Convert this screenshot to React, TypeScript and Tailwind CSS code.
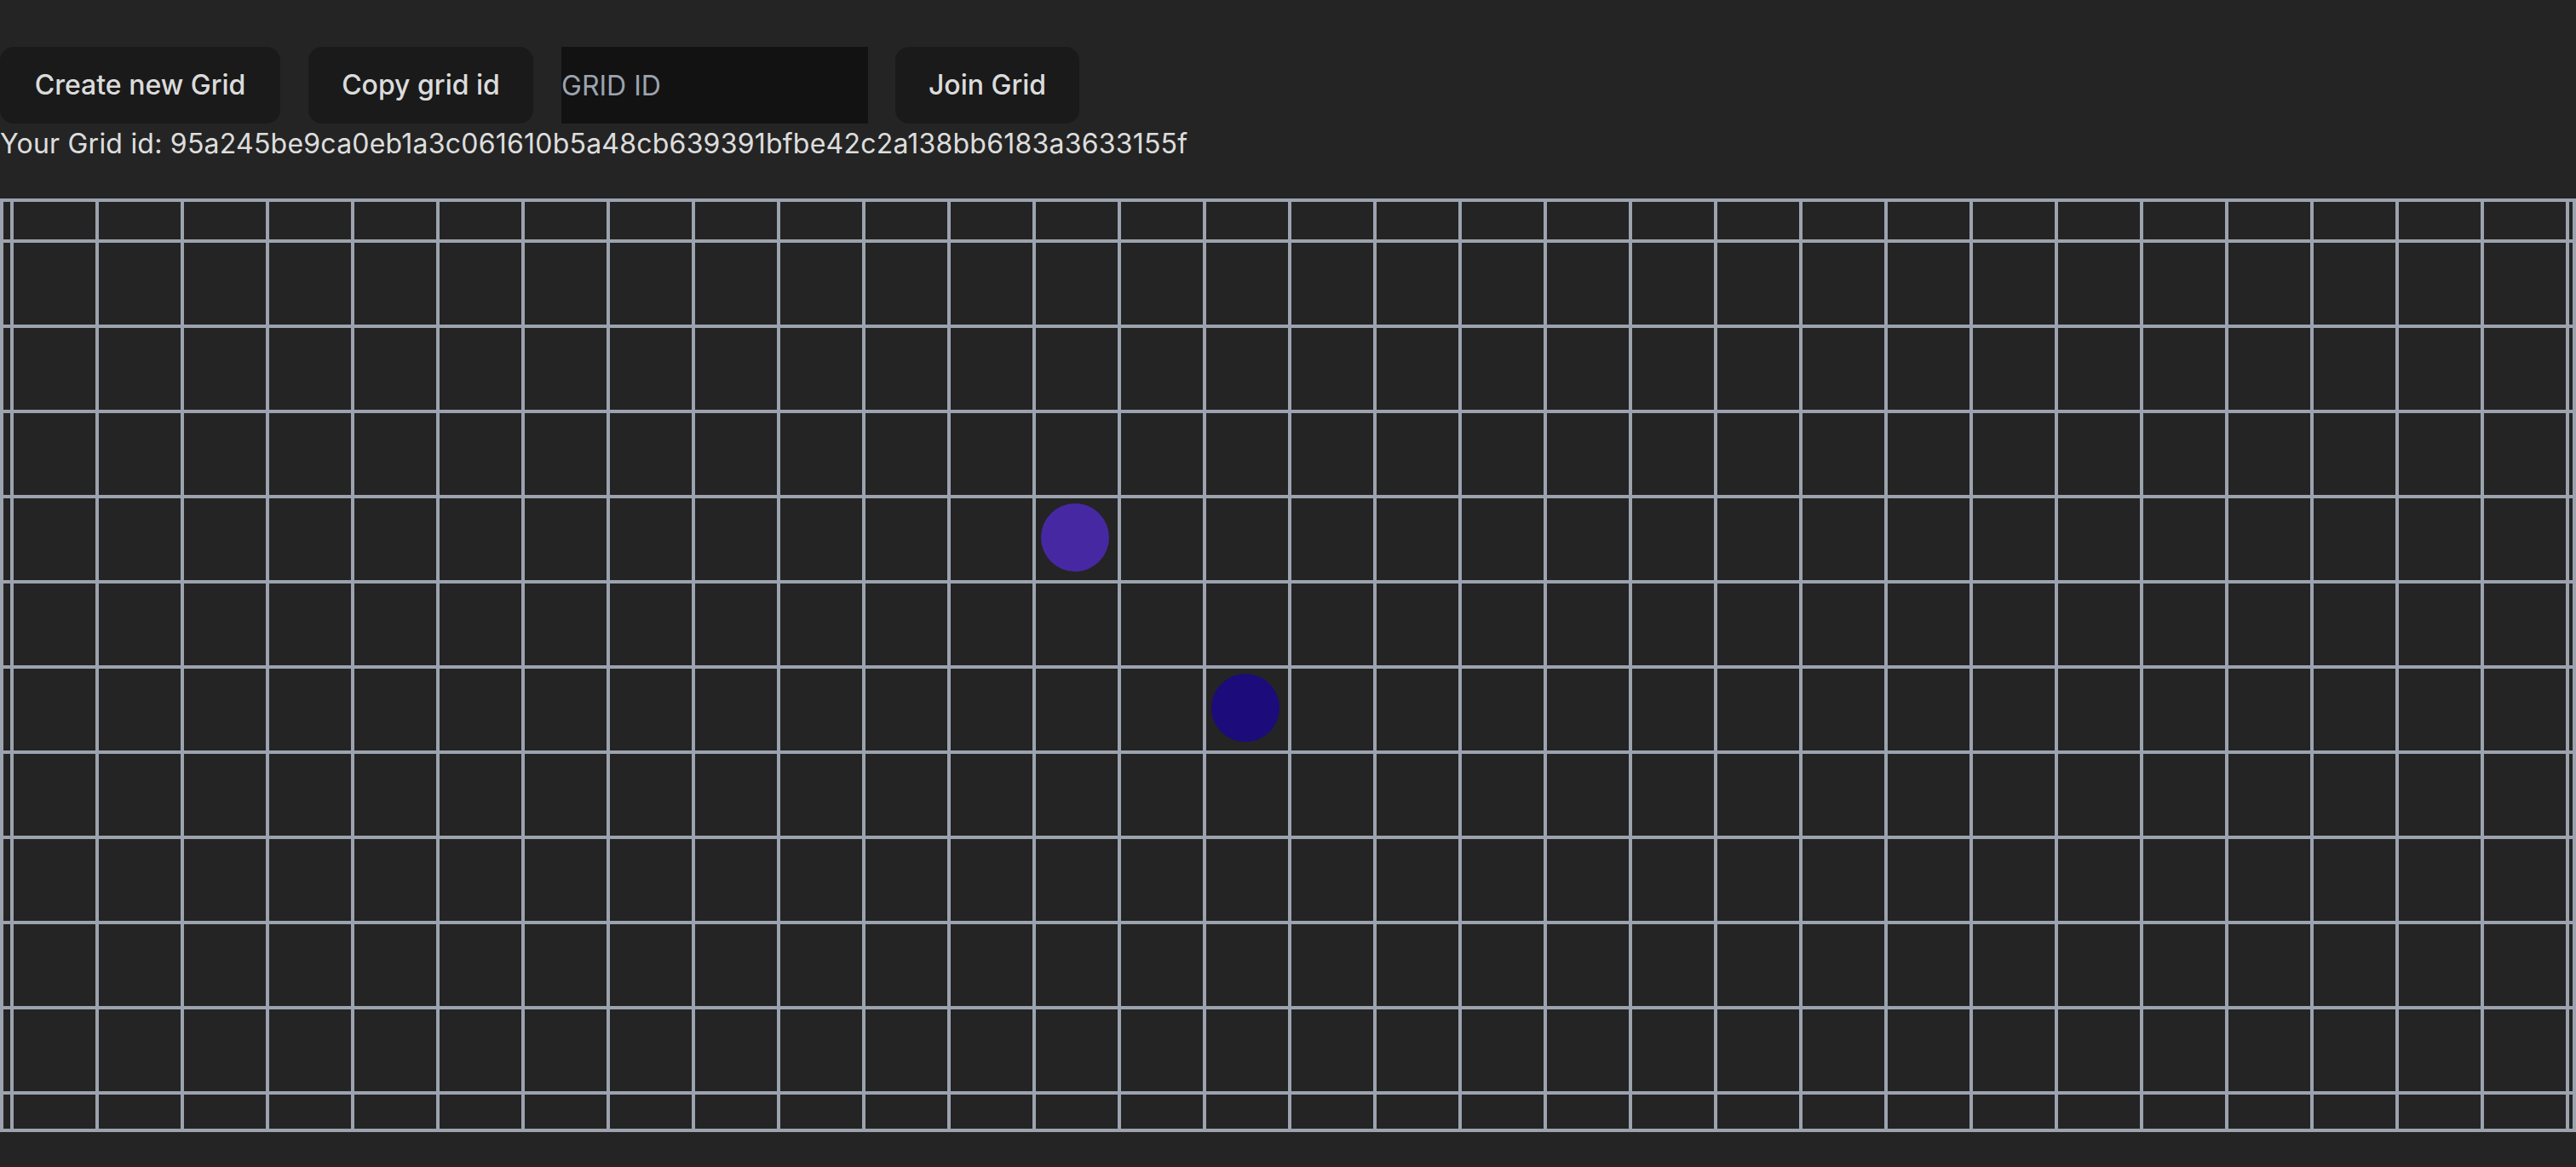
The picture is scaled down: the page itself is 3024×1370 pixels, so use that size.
import React, { useState } from 'react';

const gridId = '95a245be9ca0eb1a3c061610b5a48cb639391bfbe42c2a138bb6183a3633155f';

// players sit on the board at cell pitch 100px
const players = [
    { id: 'a', left: 1218, top: 354, color: 'bg-[#4629a2]' },
    { id: 'b', left: 1418, top: 554, color: 'bg-[#1b0b7b]' },
];

export default function App() {
    const [joinId, setJoinId] = useState('');

    return (
        <div className="h-screen overflow-hidden bg-[#242424] text-[rgba(255,255,255,0.87)] font-['Inter','Noto_Sans',sans-serif] text-[32px] leading-[48px] pt-[55px]">
            {/* Controls */}
            <div className="flex items-center gap-[33px]">
                <button className="h-[90px] w-[329px] rounded-[16px] bg-[#1a1a1a] border border-transparent font-medium whitespace-nowrap">
                    Create new Grid
                </button>
                <button className="h-[90px] w-[264px] rounded-[16px] bg-[#1a1a1a] border border-transparent font-medium whitespace-nowrap">
                    Copy grid id
                </button>
                <input
                    value={joinId}
                    onChange={e => setJoinId(e.target.value)}
                    placeholder="GRID ID"
                    className="h-[90px] w-[360px] -mr-px bg-[#121212] outline-none placeholder:text-[#9ca3af]"
                />
                <button className="h-[90px] w-[216px] rounded-[16px] bg-[#1a1a1a] border border-transparent font-medium whitespace-nowrap">
                    Join Grid
                </button>
            </div>
            <p className="tracking-[0.22px]">Your Grid id: {gridId}</p>

            {/* Board */}
            <div className="relative mt-[40px] h-[1096px] border-4 border-[#9ca3af] overflow-hidden bg-[linear-gradient(to_right,#9ca3af_4px,transparent_4px),linear-gradient(to_bottom,#9ca3af_4px,transparent_4px)] bg-[size:100px_100px] bg-[position:8px_44px]">
                {players.map(p => (
                    <div
                        key={p.id}
                        className={`absolute w-[80px] h-[80px] rounded-full ${p.color}`}
                        style={{ left: p.left, top: p.top }}
                    />
                ))}
            </div>
        </div>
    );
}
